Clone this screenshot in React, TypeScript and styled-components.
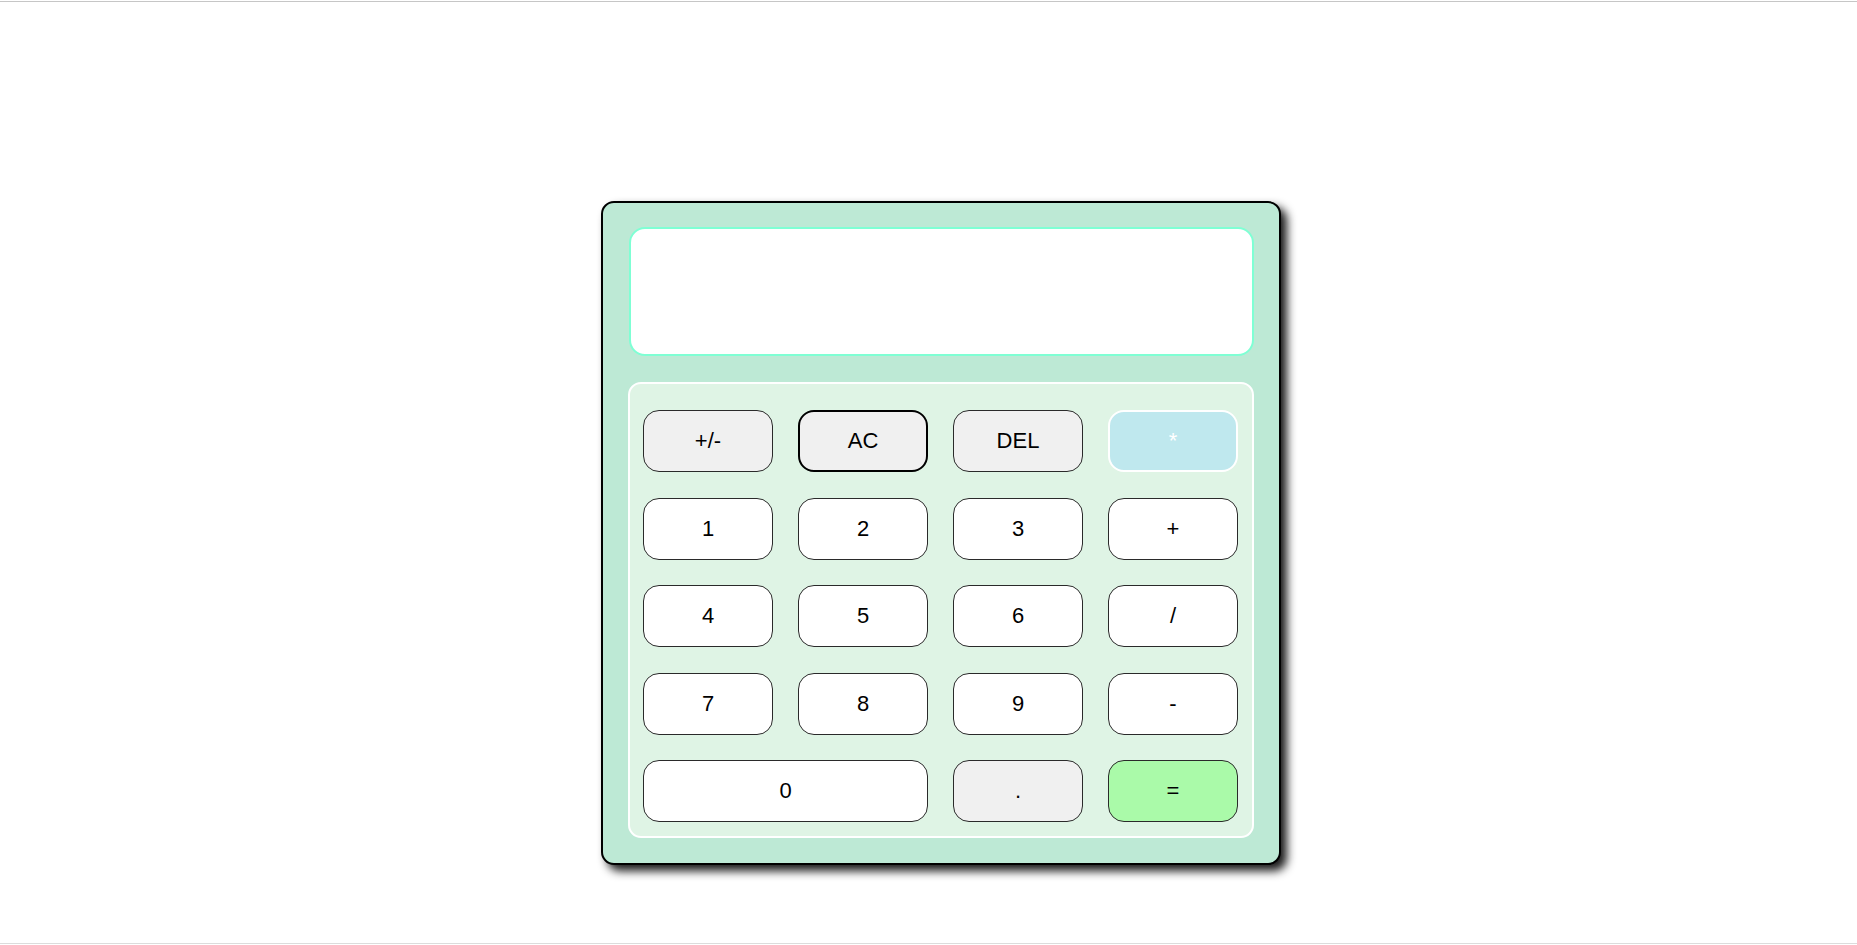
import React from "react";
import styled, { createGlobalStyle } from "styled-components";

const Global = createGlobalStyle`
  * { box-sizing: border-box; }
  html, body { margin: 0; padding: 0; background: #ffffff; }
  body { font-family: "Liberation Sans", Arial, sans-serif; }
`;

const Page = styled.div`
  height: 945px;
  padding-top: 1px;
  display: flex;
  flex-direction: column;
`;

const TopLine = styled.div`
  height: 1px;
  background: #c6c6c6;
  flex: none;
`;

const Stage = styled.div`
  flex: 1;
  display: flex;
  justify-content: center;
  align-items: flex-start;
  padding-top: 199px;
  padding-left: 25px;
`;

const BottomLine = styled.div`
  height: 1px;
  background: #dcdcdc;
  flex: none;
  margin-bottom: 1px;
`;

const Calculator = styled.div`
  width: 680px;
  height: 664px;
  background: #bde9d5;
  border: 2px solid #000;
  border-radius: 13px;
  box-shadow: 6px 6px 10px rgba(0, 0, 0, 0.9);
  padding: 24px 25px 25px 25px;
  display: flex;
  flex-direction: column;
  align-items: center;
  gap: 26px;
`;

const Display = styled.div`
  width: 625px;
  height: 129px;
  flex: none;
  background: #ffffff;
  border: 2px solid #7fffd4;
  border-radius: 16px;
`;

const Keypad = styled.div`
  width: 626px;
  flex: 1;
  background: #dff4e5;
  border: 2px solid #ffffff;
  border-radius: 13px;
  padding: 26px 13px 13px 13px;
  display: grid;
  grid-template-columns: repeat(4, 130px);
  grid-template-rows: repeat(5, 62px);
  column-gap: 25px;
  row-gap: 25.5px;
`;

type Variant = "plain" | "gray" | "clear" | "mul" | "equals";

const Key = styled.button<{ $variant: Variant; $span?: number }>`
  font-family: "Liberation Sans", Arial, sans-serif;
  font-size: 22px;
  color: ${(p) => (p.$variant === "mul" ? "#ffffff" : "#000000")};
  background: ${(p) =>
    p.$variant === "gray" || p.$variant === "clear"
      ? "#f0f0f0"
      : p.$variant === "mul"
      ? "#bfe8ee"
      : p.$variant === "equals"
      ? "#aafaa9"
      : "#ffffff"};
  border: ${(p) =>
    p.$variant === "clear"
      ? "2px solid #000"
      : p.$variant === "mul"
      ? "2px solid #ffffff"
      : "1px solid #2a2a2a"};
  border-radius: 16px;
  grid-column: ${(p) => (p.$span ? `span ${p.$span}` : "auto")};
  display: flex;
  align-items: center;
  justify-content: center;
  padding: 0;
  cursor: pointer;
`;

const keys: { label: string; variant: Variant; span?: number }[] = [
  { label: "+/-", variant: "gray" },
  { label: "AC", variant: "clear" },
  { label: "DEL", variant: "gray" },
  { label: "*", variant: "mul" },
  { label: "1", variant: "plain" },
  { label: "2", variant: "plain" },
  { label: "3", variant: "plain" },
  { label: "+", variant: "plain" },
  { label: "4", variant: "plain" },
  { label: "5", variant: "plain" },
  { label: "6", variant: "plain" },
  { label: "/", variant: "plain" },
  { label: "7", variant: "plain" },
  { label: "8", variant: "plain" },
  { label: "9", variant: "plain" },
  { label: "-", variant: "plain" },
  { label: "0", variant: "plain", span: 2 },
  { label: ".", variant: "gray" },
  { label: "=", variant: "equals" },
];

export default function App() {
  return (
    <>
      <Global />
      <Page>
        <TopLine />
        <Stage>
          <Calculator>
            <Display />
            <Keypad>
              {keys.map((k) => (
                <Key key={k.label} $variant={k.variant} $span={k.span}>
                  {k.label}
                </Key>
              ))}
            </Keypad>
          </Calculator>
        </Stage>
        <BottomLine />
      </Page>
    </>
  );
}
